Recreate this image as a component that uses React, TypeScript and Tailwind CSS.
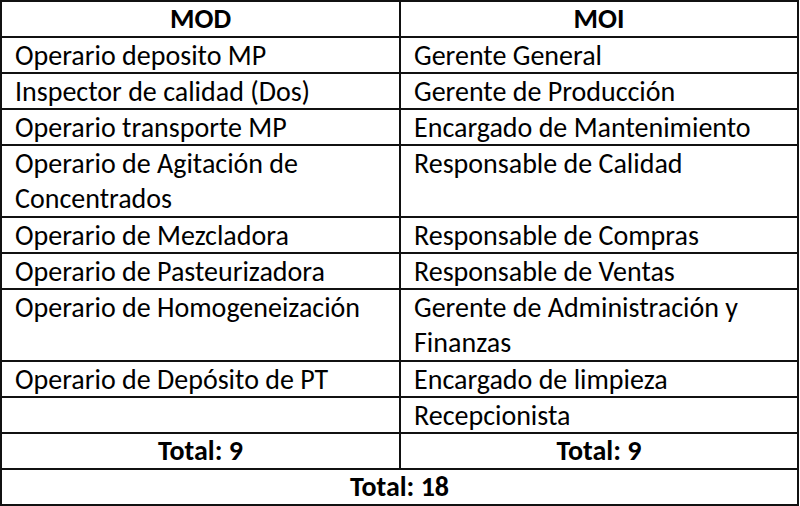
const rows: [string, string, boolean?][] = [
  ["Operario deposito MP", "Gerente General"],
  ["Inspector de calidad (Dos)", "Gerente de Producción"],
  ["Operario transporte MP", "Encargado de Mantenimiento"],
  ["Operario de Agitación de\nConcentrados", "Responsable de Calidad", true],
  ["Operario de Mezcladora", "Responsable de Compras"],
  ["Operario de Pasteurizadora", "Responsable de Ventas"],
  ["Operario de Homogeneización", "Gerente de Administración y\nFinanzas", true],
  ["Operario de Depósito de PT", "Encargado de limpieza"],
  ["", "Recepcionista"],
];

function Cell({ text, tall }: { text: string; tall?: boolean }) {
  return (
    <div
      className={`border-r-2 border-b-2 border-[#111] pl-[13px] leading-[35px] whitespace-pre-line ${
        tall ? "h-[72px]" : "h-[36px]"
      }`}
    >
      {text}
    </div>
  );
}

function TotalCell({ text, span }: { text: string; span?: boolean }) {
  return (
    <div
      className={`h-[36px] border-r-2 border-b-2 border-[#111] text-center font-bold leading-[34px] ${
        span ? "col-span-2" : ""
      }`}
    >
      {text}
    </div>
  );
}

export default function App() {
  return (
    <div className="w-[800px] h-[506px] bg-white overflow-hidden">
      <div
        className="w-[799px] grid grid-cols-[399px_1fr] border-l-2 border-t-2 border-[#111] text-black text-[28px]"
        style={{ fontFamily: "Carlito, Lato, 'Liberation Sans', sans-serif" }}
      >
        <TotalCell text="MOD" />
        <TotalCell text="MOI" />
        {rows.map(([a, b, tall], i) => (
          <div key={i} className="contents">
            <Cell text={a} tall={tall} />
            <Cell text={b} tall={tall} />
          </div>
        ))}
        <TotalCell text="Total: 9" />
        <TotalCell text="Total: 9" />
        <TotalCell text="Total: 18" span />
      </div>
    </div>
  );
}
